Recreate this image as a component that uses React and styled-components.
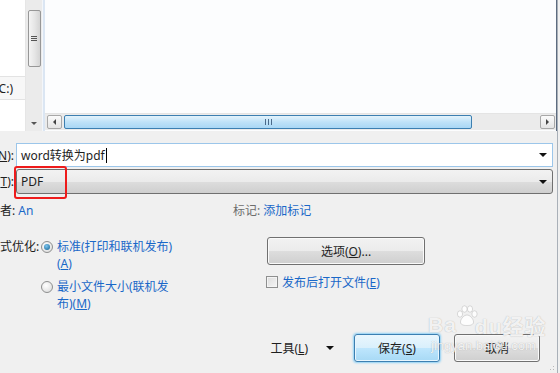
import React from 'react';
import styled, { createGlobalStyle } from 'styled-components';

const GlobalStyle = createGlobalStyle`
  html, body {
    margin: 0;
    padding: 0;
    background: #f0f0f0;
  }
  body {
    font-family: "Noto Sans", "Noto Sans CJK SC", sans-serif;
    font-size: 12px;
    color: #1e1e1e;
  }
`;

const Window = styled.div`
  position: relative;
  width: 557px;
  height: 373px;
  overflow: hidden;
  display: flex;
  flex-direction: column;
  background: #f0f0f0;
  border-right: 1px solid #a9b0b8;
`;

const Browser = styled.div`
  display: flex;
  height: 131px;
  flex-shrink: 0;
  background: #fcfdfe;
  border-right: 2px solid #5d6c80;
  margin-right: -1px;
`;

const NavPane = styled.div`
  width: 25px;
  background: #fff;
  display: flex;
  flex-direction: column;
  padding-top: 76px;
  box-sizing: border-box;
`;

const NavItem = styled.div`
  height: 22px;
  display: flex;
  align-items: center;
  justify-content: flex-end;
  padding-right: 12px;
  background: #f7f7f7;
  border-top: 1px solid #e3e3e3;
  border-bottom: 1px solid #e3e3e3;
  overflow: hidden;
  white-space: nowrap;
  font-size: 12px;
`;

const VScroll = styled.div`
  width: 16px;
  background: #ebebeb;
  display: flex;
  flex-direction: column;
  align-items: center;
  border-left: 1px solid #e6e6e6;
`;

const VThumb = styled.div`
  margin-top: 10px;
  width: 13px;
  height: 57px;
  box-sizing: border-box;
  border: 1px solid #979797;
  border-radius: 2px;
  background: linear-gradient(to right, #f4f4f4, #e6e6e6 50%, #d4d4d4);
  display: flex;
  align-items: center;
  justify-content: center;
`;

const Grip = styled.div`
  width: ${(p) => (p.$horizontal ? '7px' : '6px')};
  height: ${(p) => (p.$horizontal ? '6px' : '5px')};
  background: ${(p) =>
    p.$horizontal
      ? 'repeating-linear-gradient(to right, #4a6a8a 0 1px, transparent 1px 3px)'
      : 'repeating-linear-gradient(to bottom, #555 0 1px, transparent 1px 2px)'};
`;

const ScrollArrow = styled.div`
  margin-top: auto;
  margin-bottom: 6px;
  width: 0;
  height: 0;
  border-left: 3px solid transparent;
  border-right: 3px solid transparent;
  border-top: 3px solid #555;
`;

const Divider = styled.div`
  width: 2px;
  background: #dbe6f3;
  border-left: 1px solid #f3f6fa;
`;

const FileList = styled.div`
  flex: 1;
  display: flex;
  flex-direction: column;
  justify-content: flex-end;
  padding-bottom: 1px;
  background: #fcfdfe;
`;

const HScroll = styled.div`
  height: 16px;
  display: flex;
  align-items: center;
  gap: 2px;
  padding: 0 1px 0 2px;
  background: #ebebeb;
  border-top: 1px solid #e4e4e4;
`;

const ScrollButton = styled.div`
  width: 15px;
  height: 14px;
  box-sizing: border-box;
  border: 1px solid #a8a8a8;
  border-radius: 2px;
  background: linear-gradient(#fbfbfb, #e4e4e4);
  display: flex;
  align-items: center;
  justify-content: center;
  margin-left: ${(p) => (p.$end ? 'auto' : '0')};
`;

const SideArrow = styled.div`
  width: 0;
  height: 0;
  border-top: 3px solid transparent;
  border-bottom: 3px solid transparent;
  ${(p) => (p.$right ? 'border-left: 3px solid #444;' : 'border-right: 3px solid #444;')}
`;

const HThumb = styled.div`
  width: 408px;
  height: 14px;
  box-sizing: border-box;
  border: 1px solid #3c7fb1;
  border-radius: 2px;
  background: linear-gradient(#e3f3fc, #bfe2f8 50%, #a9d7f5);
  display: flex;
  align-items: center;
  justify-content: center;
`;

const Form = styled.div`
  flex: 1;
  display: flex;
  flex-direction: column;
  padding-right: 4px;
`;

const FieldRow = styled.div`
  display: flex;
  align-items: center;
  margin-top: ${(p) => p.$top || 0}px;
`;

const FieldLabel = styled.div`
  width: 16px;
  flex-shrink: 0;
  display: flex;
  justify-content: flex-end;
  font-size: 12px;
  white-space: nowrap;
  overflow: hidden;
  padding-right: 2px;
  box-sizing: border-box;
`;

const Under = styled.span`
  text-decoration: underline;
`;

const TextInput = styled.div`
  flex: 1;
  height: 24px;
  box-sizing: border-box;
  border: 1px solid #9cc6ea;
  background: #fff;
  display: flex;
  align-items: center;
  padding: 0 5px 0 4px;
  font-size: 12px;
`;

const Caret = styled.span`
  width: 1px;
  height: 15px;
  background: #000;
  margin-left: 1px;
`;

const ComboBox = styled.div`
  flex: 1;
  height: 25px;
  box-sizing: border-box;
  border: 1px solid #707070;
  border-radius: 3px;
  background: linear-gradient(#f2f2f2, #ebebeb 50%, #dddddd 51%, #cfcfcf);
  display: flex;
  align-items: center;
  padding: 0 5px 0 4px;
  font-size: 12px;
`;

const DropArrow = styled.div`
  margin-left: auto;
  width: 0;
  height: 0;
  border-left: 4px solid transparent;
  border-right: 4px solid transparent;
  border-top: 4px solid #111;
`;

const Highlight = styled.div`
  position: absolute;
  left: 14px;
  top: 166px;
  width: 53px;
  height: 33px;
  box-sizing: border-box;
  border: 2px solid #ee1b1b;
  border-radius: 3px;
`;

const MetaRow = styled.div`
  display: flex;
  align-items: center;
  height: 18px;
  margin-top: 7px;
  font-size: 12px;
  white-space: pre;
`;

const MetaLeft = styled.div`
  width: 233px;
  white-space: pre;
`;

const Dim = styled.span`
  color: ${(p) => (p.$grey ? '#6d6d6d' : '#1e1e1e')};
`;

const Link = styled.span`
  color: #1a68c8;
`;

const Options = styled.div`
  display: flex;
  margin-top: 16px;
`;

const LeftCol = styled.div`
  width: 267px;
  display: flex;
  align-items: flex-start;
`;

const OptLabel = styled.div`
  width: 41px;
  padding-top: 3px;
  font-size: 12px;
  line-height: 17px;
  white-space: nowrap;
`;

const RadioGroup = styled.div`
  display: flex;
  flex-direction: column;
  gap: 3px;
`;

const RadioItem = styled.div`
  display: flex;
  align-items: flex-start;
  gap: 4px;
`;

const RadioCircle = styled.div`
  width: 12px;
  height: 12px;
  margin-top: 6px;
  flex-shrink: 0;
  box-sizing: border-box;
  border-radius: 50%;
  border: 1px solid #8e8f8f;
  background: radial-gradient(circle at 40% 35%, #ffffff, #d8d8d8);
  display: flex;
  align-items: center;
  justify-content: center;

  &::after {
    content: '';
    display: ${(p) => (p.$checked ? 'block' : 'none')};
    width: 6px;
    height: 6px;
    border-radius: 50%;
    background: radial-gradient(circle at 40% 35%, #7fc6f0, #0f5f8f);
  }
`;

const RadioText = styled.div`
  width: 118px;
  font-size: 12px;
  line-height: 17px;
  color: #1a68c8;
  padding-top: 3px;
`;

const RightCol = styled.div`
  display: flex;
  flex-direction: column;
  gap: 8px;
  padding-top: 2px;
`;

const Button = styled.div`
  width: ${(p) => p.$width}px;
  height: 28px;
  box-sizing: border-box;
  border: 1px solid ${(p) => (p.$primary ? '#3c7fb1' : '#707070')};
  border-radius: 3px;
  background: ${(p) =>
    p.$primary
      ? 'linear-gradient(#eaf6fd, #d9f0fc 50%, #bee6fd 51%, #a7d9f5)'
      : 'linear-gradient(#f2f2f2, #ebebeb 50%, #dddddd 51%, #cfcfcf)'};
  box-shadow: ${(p) => (p.$primary ? '0 0 2px 1px #8ed0f5, inset 0 0 0 1px #e8f6fe' : 'inset 0 0 0 1px #fafafa')};
  display: flex;
  align-items: center;
  justify-content: center;
  font-size: 12px;
  color: #1e1e1e;
`;

const CheckRow = styled.div`
  display: flex;
  align-items: center;
  gap: 4px;
  margin-left: -1px;
  font-size: 12px;
`;

const CheckBox = styled.div`
  width: 12px;
  height: 12px;
  box-sizing: border-box;
  border: 1px solid #8e8f8f;
  background: linear-gradient(135deg, #dcdcdc, #f5f5f5);
  box-shadow: inset 0 0 0 1px #f4f4f4;
`;

const Footer = styled.div`
  display: flex;
  align-items: center;
  justify-content: flex-end;
  margin-top: auto;
  margin-bottom: 11px;
  padding-right: 13px;
`;

const Tools = styled.div`
  display: flex;
  align-items: center;
  font-size: 12px;
  margin-right: 20px;
  gap: 18px;
`;

const FooterButtons = styled.div`
  display: flex;
  gap: 14px;
`;

const ResizeGrip = styled.div`
  position: absolute;
  right: 1px;
  bottom: 1px;
  width: 10px;
  height: 10px;
  background: radial-gradient(circle, #b8b8b8 0.8px, transparent 1px) 0 0 / 3px 3px;
  clip-path: polygon(100% 0, 100% 100%, 0 100%);
`;

const Watermark = styled.div`
  position: absolute;
  left: 428px;
  top: 310px;
  display: flex;
  flex-direction: column;
  align-items: flex-start;
  color: rgba(255, 255, 255, 0.85);
  text-shadow: 0 0 1px rgba(120, 120, 120, 0.6);
  pointer-events: none;
  font-family: "Liberation Sans", "Noto Sans CJK SC", sans-serif;
`;

const MarkTitle = styled.div`
  font-size: 21px;
  font-weight: bold;
  letter-spacing: 1px;
  display: flex;
  align-items: center;
`;

const MarkUrl = styled.div`
  font-size: 13px;
  margin-top: -2px;
  margin-left: 3px;
`;

const Paw = () => (
  <svg width="24" height="22" viewBox="0 0 24 22" style={{ margin: '0 -4px 0 -2px', position: 'relative', top: '-9px' }}>
    <g fill="rgba(255,255,255,0.85)" stroke="rgba(140,140,140,0.5)" strokeWidth="0.6">
      <ellipse cx="5" cy="9" rx="2.6" ry="3.2" />
      <ellipse cx="9.5" cy="4" rx="2.6" ry="3.2" />
      <ellipse cx="15" cy="4" rx="2.6" ry="3.2" />
      <ellipse cx="19.5" cy="9" rx="2.6" ry="3.2" />
      <path d="M12 10c-3 0-6.5 4-6.5 7 0 2.5 2.5 3.5 6.5 3.5s6.5-1 6.5-3.5c0-3-3.5-7-6.5-7z" />
    </g>
  </svg>
);

const App = () => (
  <>
    <GlobalStyle />
    <Window>
      <Browser>
        <NavPane>
          <NavItem>C:)</NavItem>
        </NavPane>
        <VScroll>
          <VThumb>
            <Grip />
          </VThumb>
          <ScrollArrow />
        </VScroll>
        <Divider />
        <FileList>
          <HScroll>
            <ScrollButton>
              <SideArrow />
            </ScrollButton>
            <HThumb>
              <Grip $horizontal />
            </HThumb>
            <ScrollButton $end>
              <SideArrow $right />
            </ScrollButton>
          </HScroll>
        </FileList>
      </Browser>

      <Form>
        <FieldRow $top={12}>
          <FieldLabel>
            <span>
              (<Under>N</Under>):
            </span>
          </FieldLabel>
          <TextInput>
            word转换为pdf
            <Caret />
            <DropArrow />
          </TextInput>
        </FieldRow>
        <FieldRow $top={2}>
          <FieldLabel>
            <span>
              (<Under>T</Under>):
            </span>
          </FieldLabel>
          <ComboBox>
            PDF
            <DropArrow />
          </ComboBox>
        </FieldRow>

        <MetaRow>
          <MetaLeft>
            <Dim>者: </Dim>
            <Link>An</Link>
          </MetaLeft>
          <Dim $grey>标记: </Dim>
          <Link>添加标记</Link>
        </MetaRow>

        <Options>
          <LeftCol>
            <OptLabel>式优化:</OptLabel>
            <RadioGroup>
              <RadioItem>
                <RadioCircle $checked />
                <RadioText>
                  标准(打印和联机发布)
                  <br />(<Under>A</Under>)
                </RadioText>
              </RadioItem>
              <RadioItem>
                <RadioCircle />
                <RadioText>
                  最小文件大小(联机发布)(<Under>M</Under>)
                </RadioText>
              </RadioItem>
            </RadioGroup>
          </LeftCol>
          <RightCol>
            <Button $width={158}>
              选项(<Under>O</Under>)...
            </Button>
            <CheckRow>
              <CheckBox />
              <Link>
                发布后打开文件(<Under>E</Under>)
              </Link>
            </CheckRow>
          </RightCol>
        </Options>

        <Footer>
          <Tools>
            <span>
              工具(<Under>L</Under>)
            </span>
            <DropArrow />
          </Tools>
          <FooterButtons>
            <Button $width={86} $primary>
              保存(<Under>S</Under>)
            </Button>
            <Button $width={86}>取消</Button>
          </FooterButtons>
        </Footer>
      </Form>

      <Highlight />
      <Watermark>
        <MarkTitle>
          Ba<Paw />du经验
        </MarkTitle>
        <MarkUrl>jingyan.baidu.com</MarkUrl>
      </Watermark>
      <ResizeGrip />
    </Window>
  </>
);

export default App;
